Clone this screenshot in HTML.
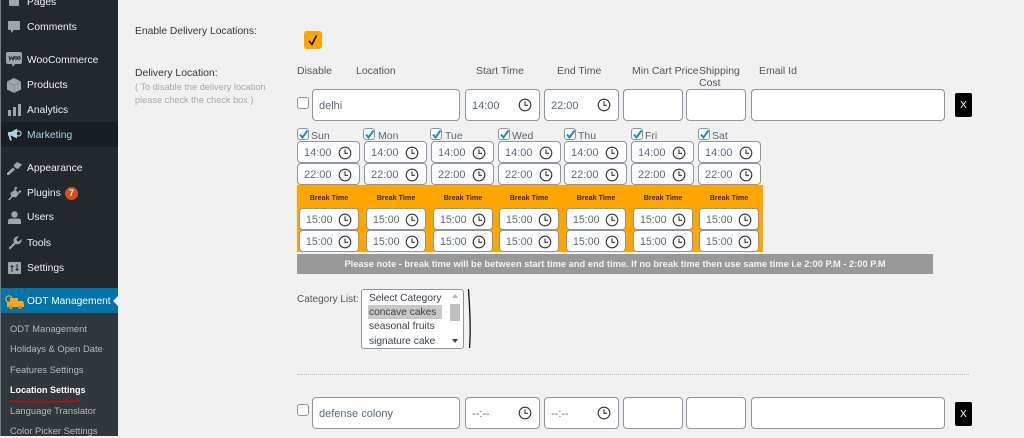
<!DOCTYPE html>
<html><head><meta charset="utf-8"><style>
html,body{margin:0;padding:0}
body{width:1024px;height:436px;overflow:hidden;background:#f1f1f1;position:relative;font-family:"Liberation Sans",sans-serif;color:#444}
.t,.i,.c,.k,.b,.ic{position:absolute}
.t{white-space:nowrap;line-height:14px;font-size:11px}
.m{color:#eee;font-size:10.3px;left:27px}
.s{color:#b4b9be;font-size:9.4px;left:10px}
.h{color:#50565c;font-size:10.5px}
.i{box-sizing:border-box;background:#fff;border:1px solid #8d96a0;border-radius:4px;color:#5b6b7c;font-size:11px;line-height:22px;padding-left:6px}
.i svg{position:absolute;top:4px;right:7px;width:14px;height:14px}
.v{height:22px}
.w{height:22px;padding-left:6px;width:60px;border-color:#8d96a0;font-size:10.6px}
.w svg{right:6px}
.l{height:32px;line-height:32px;font-size:11px;padding-left:6px}
.l svg{top:8px;right:7px}
.c{box-sizing:border-box;width:12px;height:12px;background:#fff;border:1px solid #8d96a0;border-radius:3px}
.c svg{position:absolute;left:0;top:-1px;width:11px;height:12px}
.d{color:#5d6670;font-size:10.5px}
.b{color:#3a2a00;font-size:7.2px;font-weight:bold;text-align:center;width:60px;line-height:12px;top:192px}
.k{width:17px;height:24px;background:#000;color:#fff;border-radius:2px;text-align:center;font-size:10px;line-height:25px}
.ic{background:#a0a5aa}
</style></head><body>
<svg width="0" height="0" style="position:absolute"><defs><symbol id="cl" viewBox="0 0 14 14"><circle cx="7" cy="7" r="5.8" fill="none" stroke="#333" stroke-width="1.1"/><path d="M7 3.4V7.3H10" fill="none" stroke="#333" stroke-width="1.1"/></symbol><symbol id="ck" viewBox="0 0 11 12"><path d="M2 6.5L4.5 9.5L9.5 2.5" fill="none" stroke="#1e8cbe" stroke-width="2"/></symbol></defs></svg>

<div style="position:absolute;left:0;top:0;width:118px;height:436px;background:#23282d"></div>
<div style="position:absolute;left:0;top:0;width:1px;height:436px;background:#6b7d8c"></div>
<div style="position:absolute;left:1px;top:122px;width:117px;height:25px;background:#191e23"></div>
<div style="position:absolute;left:1px;top:288px;width:117px;height:25px;background:#0073aa"></div>
<div style="position:absolute;left:1px;top:313px;width:117px;height:123px;background:#32373c"></div>
<div style="position:absolute;left:113px;top:295px;width:0;height:0;border:6px solid transparent;border-right-color:#f1f1f1;border-left:0"></div>

<div class="ic" style="left:9px;top:-5px;width:10px;height:11px;border-radius:1px"></div>
<svg class="ic" style="left:7px;top:20px;background:none" width="14" height="15" viewBox="0 0 14 15"><path d="M2 1H12A1 1 0 0 1 13 2V9A1 1 0 0 1 12 10H7L4 13V10H2A1 1 0 0 1 1 9V2A1 1 0 0 1 2 1Z" fill="#a0a5aa"/></svg>
<svg class="ic" style="left:6px;top:52px;background:none" width="16" height="15" viewBox="0 0 16 15"><path d="M2 0H14A2 2 0 0 1 16 2V10A2 2 0 0 1 14 12H9L7 15L6 12H2A2 2 0 0 1 0 10V2A2 2 0 0 1 2 0Z" fill="#a0a5aa"/><path d="M3 4L4 8L5.5 5L7 8L8 4" stroke="#23282d" fill="none"/><circle cx="10" cy="6" r="1.3" stroke="#23282d" fill="none"/><circle cx="13" cy="6" r="1.3" stroke="#23282d" fill="none"/></svg>
<svg class="ic" style="left:7px;top:78px;background:none" width="14" height="15" viewBox="0 0 14 15"><path d="M7 0L14 3.5V11.5L7 15L0 11.5V3.5Z" fill="#a0a5aa"/><path d="M0 4L7 7.5L14 4M7 7.5V15" stroke="#7b8084" fill="none" stroke-width=".7"/></svg>
<div class="ic" style="left:8px;top:110px;width:3px;height:6px"></div><div class="ic" style="left:13px;top:107px;width:3px;height:9px"></div><div class="ic" style="left:18px;top:104px;width:3px;height:12px"></div>
<svg class="ic" style="left:7px;top:127px;background:none" width="15" height="15" viewBox="0 0 15 15"><path d="M1 5H4L10 1.5V11.5L4 8.5H3.5L5 13.5H3L1.5 8.5H1Z" fill="#a9d3e0"/><circle cx="11.5" cy="6.5" r="2.5" fill="none" stroke="#a9d3e0" stroke-width="1.2"/></svg>
<svg class="ic" style="left:7px;top:161px;background:none" width="15" height="14" viewBox="0 0 15 14"><path d="M0 12L6 6.5L8 8.5L2 14H0ZM6.5 4.5L10 1L15 3.5L11 8L8.5 7Z" fill="#a0a5aa"/></svg>
<svg class="ic" style="left:8px;top:186px;background:none" width="14" height="14" viewBox="0 0 14 14"><path d="M0 14L3 10.5L2.5 7L7 3.5L11 7.5L8 11.5L4.5 11L2 14ZM6 2.5L8 0.5L9.5 2L7.5 4ZM10 6L12 4L13.5 5.5L11.5 7.5Z" fill="#a0a5aa"/></svg>
<svg class="ic" style="left:8px;top:211px;background:none" width="13" height="13" viewBox="0 0 13 13"><circle cx="6.5" cy="3.5" r="3.2" fill="#a0a5aa"/><path d="M0 13V10Q0 7.5 3 7.5H10Q13 7.5 13 10V13Z" fill="#a0a5aa"/></svg>
<svg class="ic" style="left:8px;top:236px;background:none" width="14" height="14" viewBox="0 0 14 14"><path d="M0.5 12L6 6.5Q4.5 3 7.5 1Q9.5 0 11 .5L8.5 3L9 5L11 5.5L13.5 3Q14 5 13 6.5Q11 9 7.5 8L2 13.5Z" fill="#a0a5aa"/></svg>
<svg class="ic" style="left:8px;top:262px;background:none" width="13" height="12" viewBox="0 0 13 12"><rect width="13" height="12" rx="1" fill="#a0a5aa"/><path d="M4 3V10M2.5 4.5H5.5M9 2V9M7.5 7.5H10.5" stroke="#23282d" fill="none"/></svg>
<svg class="ic" style="left:5px;top:295px;background:none" width="19" height="15" viewBox="0 0 19 15"><circle cx="4" cy="4" r="3.2" fill="none" stroke="#f5a623" stroke-width="1.2"/><path d="M5 3H13V6H18L19 9V12H2V7H5Z" fill="#f5a623"/><circle cx="6" cy="12.5" r="1.8" fill="#e08a00"/><circle cx="15" cy="12.5" r="1.8" fill="#e08a00"/></svg>

<div class="t m" style="top:-4px">Pages</div>
<div class="t m" style="top:21px">Comments</div>
<div class="t m" style="top:54px">WooCommerce</div>
<div class="t m" style="top:79px">Products</div>
<div class="t m" style="top:104px">Analytics</div>
<div class="t m" style="top:129px;color:#a9d3e0">Marketing</div>
<div class="t m" style="top:162px">Appearance</div>
<div class="t m" style="top:187px">Plugins</div>
<div style="position:absolute;left:65px;top:187px;width:13px;height:13px;border-radius:50%;background:#d54e21;color:#fff;font-size:9px;font-weight:bold;text-align:center;line-height:13px">7</div>
<div class="t m" style="top:211px">Users</div>
<div class="t m" style="top:237px">Tools</div>
<div class="t m" style="top:262px">Settings</div>
<div class="t m" style="top:295px;color:#fff;font-size:10.2px">ODT Management</div>
<div class="t s" style="top:322px">ODT Management</div>
<div class="t s" style="top:342px">Holidays &amp; Open Date</div>
<div class="t s" style="top:363px">Features Settings</div>
<div class="t s" style="top:383px;color:#fff;font-weight:bold;font-size:9px">Location Settings</div>
<svg style="position:absolute;left:9px;top:399px" width="75" height="5"><path d="M1 2Q25 3.5 40 3Q60 3 72 1.5" stroke="#e00000" stroke-width="1.2" fill="none"/></svg>
<div class="t s" style="top:404px">Language Translator</div>
<div class="t s" style="top:424px">Color Picker Settings</div>

<div class="t" style="left:135px;top:25px;color:#32373c;font-size:10.3px">Enable Delivery Locations:</div>
<div class="t" style="left:135px;top:67px;color:#32373c;font-size:10.4px">Delivery Location:</div>
<div class="t" style="left:135px;top:81px;color:#a5a9ad;font-size:9.2px;line-height:13px;white-space:normal;width:135px">( To disable the delivery location please check the check box )</div>

<div style="position:absolute;left:304px;top:31px;width:18px;height:18px;background:#ffa500;border-radius:3px"></div>
<svg style="position:absolute;left:304px;top:31px" width="18" height="18"><path d="M5 10L8 13.5L12.5 4.5" fill="none" stroke="#111" stroke-width="1.6"/></svg>

<div class="t h" style="left:297px;top:64px">Disable</div>
<div class="t h" style="left:356px;top:64px">Location</div>
<div class="t h" style="left:476px;top:64px">Start Time</div>
<div class="t h" style="left:557px;top:64px">End Time</div>
<div class="t h" style="left:632px;top:64px">Min Cart Price</div>
<div class="t h" style="left:699px;top:64px">Shipping</div>
<div class="t h" style="left:699px;top:76px">Cost</div>
<div class="t h" style="left:759px;top:64px">Email Id</div>

<div class="c" style="left:297px;top:97px"></div>
<div class="i l" style="left:312px;top:89px;width:148px">delhi</div>
<div class="i l" style="left:465px;top:89px;width:75px">14:00<svg><use href="#cl"/></svg></div>
<div class="i l" style="left:544px;top:89px;width:75px">22:00<svg><use href="#cl"/></svg></div>
<div class="i l" style="left:623px;top:89px;width:60px"></div>
<div class="i l" style="left:686px;top:89px;width:60px"></div>
<div class="i l" style="left:751px;top:89px;width:194px"></div>
<div class="k" style="left:955px;top:93px">X</div>

<div class="c" style="left:297px;top:128px"><svg><use href="#ck"/></svg></div><div class="t d" style="left:311px;top:129px">Sun</div>
<div class="c" style="left:363px;top:128px"><svg><use href="#ck"/></svg></div><div class="t d" style="left:378px;top:129px">Mon</div>
<div class="c" style="left:430px;top:128px"><svg><use href="#ck"/></svg></div><div class="t d" style="left:445px;top:129px">Tue</div>
<div class="c" style="left:498px;top:128px"><svg><use href="#ck"/></svg></div><div class="t d" style="left:512px;top:129px">Wed</div>
<div class="c" style="left:564px;top:128px"><svg><use href="#ck"/></svg></div><div class="t d" style="left:578px;top:129px">Thu</div>
<div class="c" style="left:631px;top:128px"><svg><use href="#ck"/></svg></div><div class="t d" style="left:645px;top:129px">Fri</div>
<div class="c" style="left:698px;top:128px"><svg><use href="#ck"/></svg></div><div class="t d" style="left:712px;top:129px">Sat</div>

<div class="i v" style="left:297px;top:141px;width:63px">14:00<svg><use href="#cl"/></svg></div>
<div class="i v" style="left:364px;top:141px;width:63px">14:00<svg><use href="#cl"/></svg></div>
<div class="i v" style="left:431px;top:141px;width:63px">14:00<svg><use href="#cl"/></svg></div>
<div class="i v" style="left:498px;top:141px;width:63px">14:00<svg><use href="#cl"/></svg></div>
<div class="i v" style="left:564px;top:141px;width:63px">14:00<svg><use href="#cl"/></svg></div>
<div class="i v" style="left:631px;top:141px;width:63px">14:00<svg><use href="#cl"/></svg></div>
<div class="i v" style="left:698px;top:141px;width:63px">14:00<svg><use href="#cl"/></svg></div>
<div class="i v" style="left:297px;top:163px;width:63px">22:00<svg><use href="#cl"/></svg></div>
<div class="i v" style="left:364px;top:163px;width:63px">22:00<svg><use href="#cl"/></svg></div>
<div class="i v" style="left:431px;top:163px;width:63px">22:00<svg><use href="#cl"/></svg></div>
<div class="i v" style="left:498px;top:163px;width:63px">22:00<svg><use href="#cl"/></svg></div>
<div class="i v" style="left:564px;top:163px;width:63px">22:00<svg><use href="#cl"/></svg></div>
<div class="i v" style="left:631px;top:163px;width:63px">22:00<svg><use href="#cl"/></svg></div>
<div class="i v" style="left:698px;top:163px;width:63px">22:00<svg><use href="#cl"/></svg></div>

<div style="position:absolute;left:297px;top:185px;width:466px;height:67px;background:#ffa500"></div>
<div class="b" style="left:299px">Break Time</div>
<div class="b" style="left:366px">Break Time</div>
<div class="b" style="left:433px">Break Time</div>
<div class="b" style="left:499px">Break Time</div>
<div class="b" style="left:566px">Break Time</div>
<div class="b" style="left:633px">Break Time</div>
<div class="b" style="left:699px">Break Time</div>

<div class="i w" style="left:299px;top:208px">15:00<svg><use href="#cl"/></svg></div>
<div class="i w" style="left:366px;top:208px">15:00<svg><use href="#cl"/></svg></div>
<div class="i w" style="left:433px;top:208px">15:00<svg><use href="#cl"/></svg></div>
<div class="i w" style="left:499px;top:208px">15:00<svg><use href="#cl"/></svg></div>
<div class="i w" style="left:566px;top:208px">15:00<svg><use href="#cl"/></svg></div>
<div class="i w" style="left:633px;top:208px">15:00<svg><use href="#cl"/></svg></div>
<div class="i w" style="left:699px;top:208px">15:00<svg><use href="#cl"/></svg></div>
<div class="i w" style="left:299px;top:230px">15:00<svg><use href="#cl"/></svg></div>
<div class="i w" style="left:366px;top:230px">15:00<svg><use href="#cl"/></svg></div>
<div class="i w" style="left:433px;top:230px">15:00<svg><use href="#cl"/></svg></div>
<div class="i w" style="left:499px;top:230px">15:00<svg><use href="#cl"/></svg></div>
<div class="i w" style="left:566px;top:230px">15:00<svg><use href="#cl"/></svg></div>
<div class="i w" style="left:633px;top:230px">15:00<svg><use href="#cl"/></svg></div>
<div class="i w" style="left:699px;top:230px">15:00<svg><use href="#cl"/></svg></div>

<div style="position:absolute;left:297px;top:254px;width:636px;height:20px;background:#999;color:#f4f4f4;font-size:9.3px;font-weight:bold;line-height:20px;text-align:center;white-space:nowrap">Please note - break time will be between start time and end time. If no break time then use same time i.e 2:00 P.M - 2:00 P.M</div>

<div class="t h" style="left:297px;top:293px;font-size:10px">Category List:</div>
<div style="position:absolute;left:361px;top:289px;width:103px;height:60px;box-sizing:border-box;background:#fff;border:1px solid #8d96a0;border-radius:3px"></div>
<div style="position:absolute;left:368px;top:305px;width:74px;height:14px;background:#c8c8c8"></div>
<div class="t" style="left:369px;top:292px;color:#3c434a;font-size:10.2px">Select Category</div>
<div class="t" style="left:369px;top:306px;color:#3c434a;font-size:10.2px">concave cakes</div>
<div class="t" style="left:369px;top:320px;color:#3c434a;font-size:10.2px">seasonal fruits</div>
<div class="t" style="left:369px;top:335px;color:#3c434a;font-size:10.2px">signature cake</div>
<div style="position:absolute;left:450px;top:304px;width:10px;height:17px;background:#c0c0c0"></div>
<div style="position:absolute;left:452px;top:294px;width:0;height:0;border:3px solid transparent;border-bottom:4px solid #b8b8b8;border-top:0"></div>
<div style="position:absolute;left:452px;top:339px;width:0;height:0;border:3px solid transparent;border-top:4px solid #444;border-bottom:0"></div>
<svg style="position:absolute;left:466px;top:288px" width="8" height="62"><path d="M2.5 1Q3.5 15 4 30Q4.5 48 3.5 60" fill="none" stroke="#111" stroke-width="1.3"/></svg>

<div style="position:absolute;left:297px;top:374px;width:672px;border-top:1px dotted #bbb"></div>

<div class="c" style="left:297px;top:404px"></div>
<div class="i l" style="left:312px;top:397px;width:148px">defense colony</div>
<div class="i l" style="left:465px;top:397px;width:75px">--:--<svg><use href="#cl"/></svg></div>
<div class="i l" style="left:544px;top:397px;width:75px">--:--<svg><use href="#cl"/></svg></div>
<div class="i l" style="left:623px;top:397px;width:60px"></div>
<div class="i l" style="left:686px;top:397px;width:60px"></div>
<div class="i l" style="left:751px;top:397px;width:194px"></div>
<div class="k" style="left:955px;top:402px">X</div>
</body></html>
